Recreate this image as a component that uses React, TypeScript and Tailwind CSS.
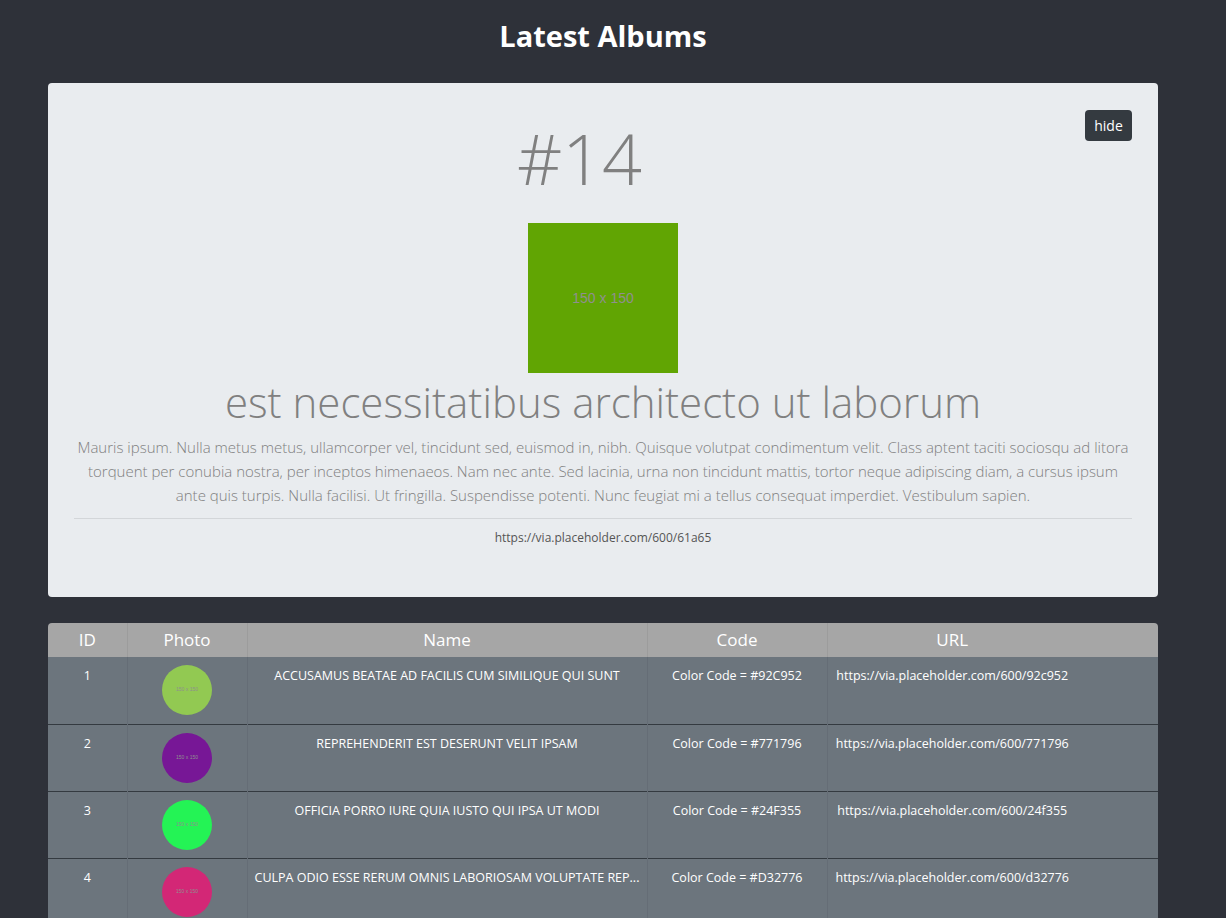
const albums = [
  { id: 1, name: 'ACCUSAMUS BEATAE AD FACILIS CUM SIMILIQUE QUI SUNT', color: '#92c952' },
  { id: 2, name: 'REPREHENDERIT EST DESERUNT VELIT IPSAM', color: '#771796' },
  { id: 3, name: 'OFFICIA PORRO IURE QUIA IUSTO QUI IPSA UT MODI', color: '#24f355' },
  { id: 4, name: 'CULPA ODIO ESSE RERUM OMNIS LABORIOSAM VOLUPTATE REPUDIANDAE', color: '#d32776' },
  { id: 5, name: 'NATUS NISI OMNIS CORPORIS FACERE MOLESTIAE RERUM IN', color: '#f66b97' },
]

// long titles get cut in code, like the original list does
const shorten = (s: string) => (s.length > 55 ? s.slice(0, 52) + '...' : s)

export default function App() {
  return (
    <div className="min-h-screen bg-[#2e3139] pr-[20px] font-['Open_Sans',sans-serif]">
      <div className="mx-auto w-[1110px] pb-10">
        {/* Header */}
        <h1 className="h-[83px] pt-[16px] text-center text-[29px] leading-[40px] font-bold text-white">
          Latest Albums
        </h1>

        {/* Featured album */}
        <div className="rounded bg-[#e9ecef] px-[26px] pt-[26px] pb-[50px] text-center">
          <div className="flex items-start">
            <div className="mt-[3px] flex-1 text-[70px] leading-[93px] font-light text-[#808080]">#14</div>
            <button className="mt-[1px] h-[31px] w-[47px] rounded bg-[#343a40] text-[14px] text-white">
              hide
            </button>
          </div>
          <div className="mx-auto mt-[18px] flex h-[150px] w-[150px] items-center justify-center bg-[#61a503] font-['Liberation_Sans',sans-serif] text-[14px] text-[#8f8f8f]">
            150 x 150
          </div>
          <h2 className="mt-[2px] text-[42px] leading-[54px] font-light text-[#808080]">
            est necessitatibus architecto ut laborum
          </h2>
          <p className="mt-[6px] text-[15px] leading-[24px] font-light text-[#808080]">
            Mauris ipsum. Nulla metus metus, ullamcorper vel, tincidunt sed, euismod in, nibh. Quisque volutpat
            condimentum velit. Class aptent taciti sociosqu ad litora torquent per conubia nostra, per inceptos
            himenaeos. Nam nec ante. Sed lacinia, urna non tincidunt mattis, tortor neque adipiscing diam, a cursus
            ipsum ante quis turpis. Nulla facilisi. Ut fringilla. Suspendisse potenti. Nunc feugiat mi a tellus
            consequat imperdiet. Vestibulum sapien.
          </p>
          <hr className="mt-[11px] border-[#d3d6d9]" />
          <p className="mt-[10px] text-[12px] text-[#555]">https://via.placeholder.com/600/61a65</p>
        </div>

        {/* Album table */}
        <table className="mt-[26px] w-full table-fixed overflow-hidden rounded-t text-center text-white">
          <thead>
            <tr className="h-[34px] bg-[#a6a6a6] text-[17px]">
              <th className="w-[79px] border-r border-[#9c9c9c] font-normal">ID</th>
              <th className="w-[120px] border-r border-[#9c9c9c] font-normal">Photo</th>
              <th className="w-[400px] border-r border-[#9c9c9c] font-normal">Name</th>
              <th className="w-[180px] border-r border-[#9c9c9c] font-normal">Code</th>
              <th className="w-[250px] font-normal">URL</th>
              <th className="font-normal"></th>
            </tr>
          </thead>
          <tbody className="bg-[#6c757d] text-[12.5px]">
            {albums.map((a) => (
              <AlbumRow key={a.id} {...a} />
            ))}
          </tbody>
        </table>
      </div>
    </div>
  )
}

function AlbumRow({ id, name, color }: { id: number; name: string; color: string }) {
  const hex = color.slice(1)
  return (
    <tr className="h-[67px] border-b border-[#343a40] align-top">
      <td className="border-r border-[#656d76] pt-[10px]">{id}</td>
      <td className="border-r border-[#656d76] pt-[8px]">
        <div
          className="mx-auto flex h-[50px] w-[50px] items-center justify-center rounded-full font-['Liberation_Sans',sans-serif] text-[5px] text-[#8f8f8f]"
          style={{ backgroundColor: color }}
        >
          150 x 150
        </div>
      </td>
      <td className="border-r border-[#656d76] px-1 pt-[10px] whitespace-nowrap">{shorten(name)}</td>
      <td className="border-r border-[#656d76] pt-[10px]">Color Code = #{hex.toUpperCase()}</td>
      <td className="pt-[10px]">https://via.placeholder.com/600/{hex}</td>
      <td></td>
    </tr>
  )
}
